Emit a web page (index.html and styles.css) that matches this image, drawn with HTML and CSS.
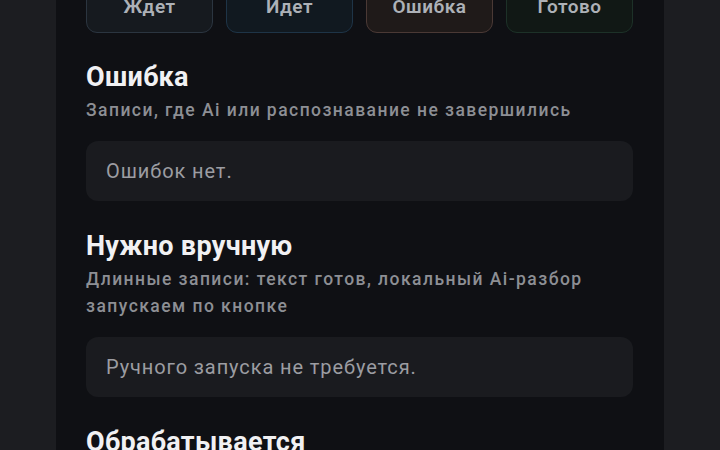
FILE: index.html
```html
<!DOCTYPE html>
<html lang="ru">
<head>
<meta charset="utf-8">
<link rel="stylesheet" href="styles.css">
</head>
<body>
<main class="column">
  <div class="chips">
    <div class="chip chip-wait">Ждет</div>
    <div class="chip chip-run">Идет</div>
    <div class="chip chip-err">Ошибка</div>
    <div class="chip chip-done">Готово</div>
  </div>

  <section class="group">
    <h2 class="title">Ошибка</h2>
    <p class="sub">Записи, где Ai или распознавание не завершились</p>
    <div class="box">Ошибок нет.</div>
  </section>

  <section class="group">
    <h2 class="title">Нужно вручную</h2>
    <p class="sub">Длинные записи: текст готов, локальный Ai-разбор запускаем по кнопке</p>
    <div class="box">Ручного запуска не требуется.</div>
  </section>

  <section class="group">
    <h2 class="title">Обрабатывается</h2>
  </section>
</main>
</body>
</html>
```

FILE: styles.css
```css
html, body {
  margin: 0;
  padding: 0;
  height: 100%;
  overflow: hidden;
}
body {
  background: #1c1d21;
  font-family: Roboto, "Noto Sans", "Liberation Sans", sans-serif;
  display: flex;
  justify-content: center;
}
.column {
  width: 608px;
  background: #0f1014;
  padding: 0 31px 0 30px;
  box-sizing: border-box;
  min-height: 100%;
}
.chips {
  display: grid;
  grid-template-columns: repeat(4, 1fr);
  column-gap: 13px;
  margin-top: -20px;
}
.chip {
  height: 53px;
  box-sizing: border-box;
  border-radius: 11px;
  border: 1.5px solid #2c3540;
  display: flex;
  align-items: center;
  justify-content: center;
  font-size: 19px;
  font-weight: 600;
  color: #adb1b7;
  letter-spacing: 0.5px;
}
.chip-wait { background: #161a1f; border-color: #2b3540; }
.chip-run  { background: #111920; border-color: #1e3447; }
.chip-err  { background: #1f1a19; border-color: #4a3935; }
.chip-done { background: #111815; border-color: #1d3128; }

.group {
  margin-top: 30px;
}
.chips + .group { margin-top: 29px; }
.title {
  margin: 0;
  font-size: 27px;
  font-weight: 700;
  color: #f1f1f3;
  line-height: 30px;
  letter-spacing: 0.3px;
}
.sub {
  margin: 5px 0 0 0;
  font-size: 17.5px;
  font-weight: 500;
  color: #8d8f94;
  line-height: 27px;
  letter-spacing: 1.45px;
}
.box {
  margin-top: 17px;
  height: 60px;
  box-sizing: border-box;
  background: #1a1b1f;
  border-radius: 12px;
  padding: 0 20px;
  display: flex;
  align-items: center;
  font-size: 20px;
  color: #9c9da2;
  letter-spacing: 0.9px;
}
```
